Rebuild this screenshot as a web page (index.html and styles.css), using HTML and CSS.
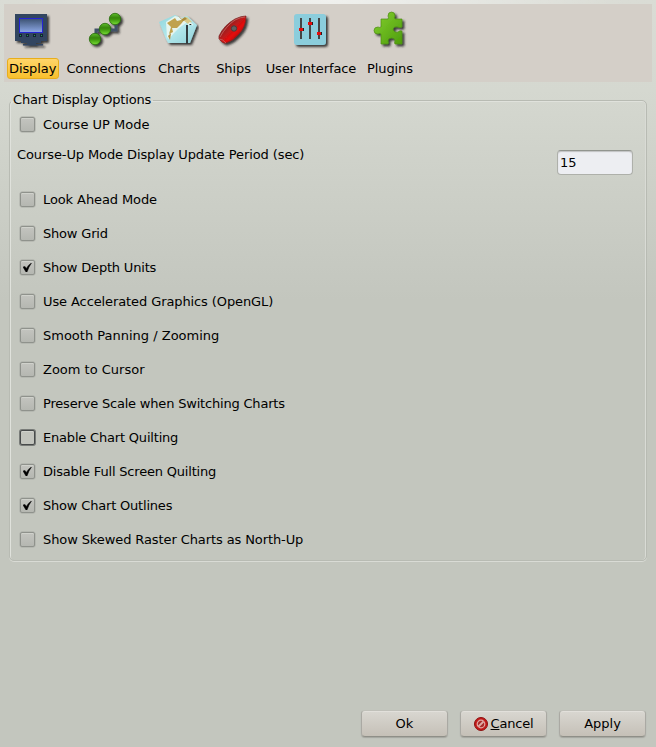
FILE: index.html
```html
<!DOCTYPE html>
<html lang="en">
<head>
<meta charset="utf-8">
<title>Options</title>
<link rel="stylesheet" href="styles.css">
</head>
<body>
<div class="dialog">
  <nav class="toolbar">
    <a class="tab active">
      <svg class="icon" viewBox="0 0 40 40">
        <defs>
          <linearGradient id="screen" x1="0" y1="0" x2="0" y2="1"><stop offset="0" stop-color="#3b5170"/><stop offset="1" stop-color="#8da8e6"/></linearGradient>
          <linearGradient id="ball" x1="0" y1="0" x2="0" y2="1"><stop offset="0" stop-color="#5fc02a"/><stop offset=".4" stop-color="#37850f"/><stop offset=".6" stop-color="#44a012"/><stop offset="1" stop-color="#7ce03a"/></linearGradient>
          <linearGradient id="paper" x1="0" y1="0" x2="1" y2="1"><stop offset="0" stop-color="#8fd6dc"/><stop offset=".5" stop-color="#b4e8ec"/><stop offset="1" stop-color="#90d0d8"/></linearGradient>
          <linearGradient id="hull" x1="0" y1="0" x2="1" y2="1"><stop offset=".2" stop-color="#7a2323"/><stop offset=".45" stop-color="#b51e1e"/><stop offset=".6" stop-color="#e60808"/><stop offset=".85" stop-color="#8a1010"/></linearGradient>
          <linearGradient id="puzzle" x1="0" y1="0" x2="1" y2="1"><stop offset="0" stop-color="#84d030"/><stop offset="1" stop-color="#4e9d0c"/></linearGradient>
          <filter id="shadow" x="-20%" y="-20%" width="150%" height="150%"><feDropShadow dx="2" dy="2" stdDeviation=".9" flood-color="#222" flood-opacity=".85"/></filter>
        </defs>
        <g filter="url(#shadow)">
          <path fill="#304461" d="M2 4H34V31H28V33H8V31H2z"/>
          <path fill="#304461" d="M14 32H23V34H30V35.500H10V34H14z"/>
        </g>
        <rect x="6.500" y="8.500" width="23" height="14" fill="url(#screen)" stroke="#2424d4"/>
        <g fill="#142134"><path d="M6 24h3v3h-3zM13 24h3v3h-3zM20 24h3v3h-3zM27 24h3v3h-3z"/></g>
        <g fill="#20a14d"><path d="M7 25h1v1h-1zM14 25h1v1h-1zM21 25h1v1h-1zM28 25h1v1h-1z"/></g>
      </svg>
      <span class="tab-label">Display</span>
    </a>
    <a class="tab">
      <svg class="icon" viewBox="0 0 40 40">
        <g filter="url(#shadow)">
          <path fill="none" stroke="#405166" stroke-width="3" d="M10 29V20H30V12"/>
          <g fill="url(#ball)" stroke="#286b0b" stroke-width=".8"><circle cx="29" cy="9" r="5.700"/><circle cx="19" cy="19" r="5.700"/><circle cx="9" cy="29" r="5.700"/></g>
        </g>
      </svg>
      <span class="tab-label">Connections</span>
    </a>
    <a class="tab">
      <svg class="icon" viewBox="0 0 40 40">
        <g filter="url(#shadow)">
          <path fill="url(#paper)" d="M0 12L16 5L22 8L28 6L38 15L31 33H9L7 29z"/>
        </g>
        <path fill="#e6f5ef" d="M7 12L16 6L27 9V13L20 18L15 23L10 29L8 27z"/>
        <path fill="#c0a24e" d="M8 13L16 8L18 11L26 9L22 14L18 18L13 18L14 22L10 24L12 17z"/>
        <path fill="#d8c987" d="M23 9L28 7L33 12L29 14z"/>
        <path fill="#a98a3b" d="M19 6L23 9L26 7L28 9L24 11zM9 26L12 23L11 30z"/>
        <path stroke="#e6f5ef" stroke-width="1.500" d="M29 15L31 13L34 15"/>
        <path stroke="#333c3f" stroke-width="2" d="M28 15V34"/>
      </svg>
      <span class="tab-label">Charts</span>
    </a>
    <a class="tab">
      <svg class="icon" viewBox="0 0 40 40">
        <g filter="url(#shadow)">
          <path fill="url(#hull)" stroke="#722" stroke-width=".7" d="M5 26Q10 15 21 9Q27 6 32 6Q32 17 25 24Q19 31 12 33Q9 34 5 29z"/>
        </g>
        <path fill="none" stroke="#c56a65" stroke-width=".8" d="M6 27Q12 16 21 10Q27 7 31 7M5 29Q9 29 12 33"/>
        <circle cx="20" cy="18.500" r="2.700" fill="#606060" stroke="#4c3939"/>
      </svg>
      <span class="tab-label">Ships</span>
    </a>
    <a class="tab">
      <svg class="icon" viewBox="0 0 40 40">
        <rect x="3" y="4" width="32" height="31" rx="3" fill="#8bcddc" filter="url(#shadow)"/>
        <path stroke="#444" stroke-width="2" d="M10 8V29M19 8V29M28 8V29"/>
        <path stroke="#222" stroke-width="3" d="M11 19.500H13M20 13.500H22M29 23.500H31"/>
        <path stroke="#e60c0c" stroke-width="3" d="M8 19.500H12M17 13.500H21M26 23.500H30"/>
      </svg>
      <span class="tab-label">User Interface</span>
    </a>
    <a class="tab">
      <svg class="icon" viewBox="0 0 40 40">
        <path filter="url(#shadow)" fill="url(#puzzle)" stroke="#4d8c16" stroke-width=".7" d="M11 9H18Q19 8 18 6Q18 2 21.500 2Q25 2 25 6Q24 8 25 9H32V17Q30 18 28 17Q24 16 23 19Q24 23 28 22Q30 20 32 21V34H25Q24 33 25 31Q25 28 21.500 28Q18 28 18 31Q19 33 18 34H11V24Q9 23 8 24Q4 24 4 20.500Q4 17 8 17Q10 18 11 17z"/>
      </svg>
      <span class="tab-label">Plugins</span>
    </a>
  </nav>

  <fieldset class="group">
    <legend class="group-title tight">Chart Display Options</legend>
    <label class="option first"><span class="box"></span>Course UP Mode</label>
    <div class="period">
      <span class="snug">Course-Up Mode Display Update Period (sec)</span>
      <input class="field" type="text" value="15">
    </div>
    <label class="option snug"><span class="box"></span>Look Ahead Mode</label>
    <label class="option tight"><span class="box"></span>Show Grid</label>
    <label class="option tight"><span class="box"><svg class="check" viewBox="0 0 9 9"><path d="M0 4L2 3.500L3.300 5.500Q5 2 8.500 0Q5.500 4 4 9H3z"/></svg></span>Show Depth Units</label>
    <label class="option snug"><span class="box"></span>Use Accelerated Graphics (OpenGL)</label>
    <label class="option"><span class="box"></span>Smooth Panning / Zooming</label>
    <label class="option"><span class="box"></span>Zoom to Cursor</label>
    <label class="option tight"><span class="box"></span>Preserve Scale when Switching Charts</label>
    <label class="option tight"><span class="box focused"></span>Enable Chart Quilting</label>
    <label class="option tight"><span class="box"><svg class="check" viewBox="0 0 9 9"><path d="M0 4L2 3.500L3.300 5.500Q5 2 8.500 0Q5.500 4 4 9H3z"/></svg></span>Disable Full Screen Quilting</label>
    <label class="option tight"><span class="box"><svg class="check" viewBox="0 0 9 9"><path d="M0 4L2 3.500L3.300 5.500Q5 2 8.500 0Q5.500 4 4 9H3z"/></svg></span>Show Chart Outlines</label>
    <label class="option snug"><span class="box"></span>Show Skewed Raster Charts as North-Up</label>
  </fieldset>

  <footer class="actions">
    <button class="button">Ok</button>
    <button class="button"><svg class="stop" viewBox="0 0 14 14"><circle cx="7" cy="7" r="6.500" fill="#c41a1a" stroke="#8c1111"/><circle cx="7" cy="7" r="3.800" fill="#a82a28" stroke="#dfa9a5" stroke-width="1.200"/><path stroke="#dfa9a5" stroke-width="1.800" d="M4.500 9.500L9.500 4.500"/></svg><span class="tight"><u>C</u>ancel</span></button>
    <button class="button">Apply</button>
  </footer>
</div>
</body>
</html>
```

FILE: styles.css
```css
* { box-sizing: border-box; }

body {
  margin: 0;
  font: 13px/16px "DejaVu Sans", sans-serif;
  color: #000;
}

.tight { letter-spacing: -.19px; }
.snug { letter-spacing: -.1px; }

.dialog {
  display: flex;
  flex-direction: column;
  height: 747px;
  padding: 4px;
  background:
    radial-gradient(ellipse 300px 64px at 50% 0, rgba(255, 255, 255, .6), rgba(255, 255, 255, 0)),
    linear-gradient(#dadcd5 0, #d5d8d0 90px, #c3c6be 300px, #c3c6be 100%);
}

.toolbar {
  display: grid;
  grid-template-columns: 52px 94px 52px 57px 98px 60px;
  height: 78px;
  padding: 6px 3px 0;
  background: #d4cfc8;
}

.tab {
  display: flex;
  flex-direction: column;
  align-items: center;
  gap: 8px;
  white-space: nowrap;
}

.icon {
  width: 40px;
  height: 40px;
}

.tab-label {
  height: 21px;
  padding: 0 1px;
  border: 1px solid transparent;
  border-radius: 3px;
  line-height: 19px;
  letter-spacing: -.1px;
}

.active .tab-label {
  width: 52px;
  border-color: #e8ae1c;
  background: linear-gradient(#ffd56a, #f8c02d);
}

.group {
  height: 469px;
  margin: 10px 5px 0;
  padding: 8px 9px 0;
  border: 1px solid #b8bbb3;
  border-radius: 5px;
  box-shadow: inset 1px 1px #e0e2dc, inset -1px 0 #d9dbd5, 0 1px #d9dbd5;
}

.group-title {
  height: 16px;
  margin-left: -8px;
  padding: 0 2px;
}

.option {
  display: flex;
  align-items: center;
  gap: 8px;
  height: 34px;
}

.option.first { height: 18px; }

.box {
  display: grid;
  place-items: center;
  width: 15px;
  height: 15px;
  margin: 0 0 1px 1px;
  border: 1px solid #8f928c;
  border-radius: 2px;
  background: linear-gradient(#c3c4bf, #b5b7b1);
  box-shadow: inset 0 1px #d0d2cc, 0 0 0 .5px #a8aaa4;
}

.focused {
  border-color: #484b4b;
  background: #c2c4bd;
  box-shadow: inset 0 1px #d0d2cc, 0 0 0 1px rgba(70, 73, 73, .6);
}

.check {
  width: 9px;
  height: 9px;
  stroke: #000;
  stroke-width: .5;
}

.period {
  display: flex;
  justify-content: space-between;
  height: 49px;
  padding: 13px 4px 0 0;
  margin-left: -2px;
}

.field {
  width: 76px;
  height: 25px;
  margin: 3px 0 0;
  padding: 0 2px;
  border: 1px solid #aeb0aa;
  border-top-color: #92958f;
  border-radius: 4px;
  background: #edeef2;
  box-shadow: inset 0 1px 1px #c0c1c2;
  font: inherit;
}

.actions {
  display: flex;
  justify-content: flex-end;
  gap: 12px;
  margin: auto 6px 6px 0;
}

.button {
  display: flex;
  align-items: center;
  justify-content: center;
  gap: 3px;
  width: 87px;
  height: 27px;
  padding: 0;
  border: 1px solid #aaa9a3;
  border-top-color: #c0c0b9;
  border-bottom-color: #8f8f88;
  border-radius: 4px;
  background: linear-gradient(#d9d7d1, #c5c0b7);
  box-shadow: inset 0 1px #e2e0db, 0 1px 1px #a5a69f;
  font: inherit;
}

.stop {
  width: 14px;
  height: 14px;
}
```
